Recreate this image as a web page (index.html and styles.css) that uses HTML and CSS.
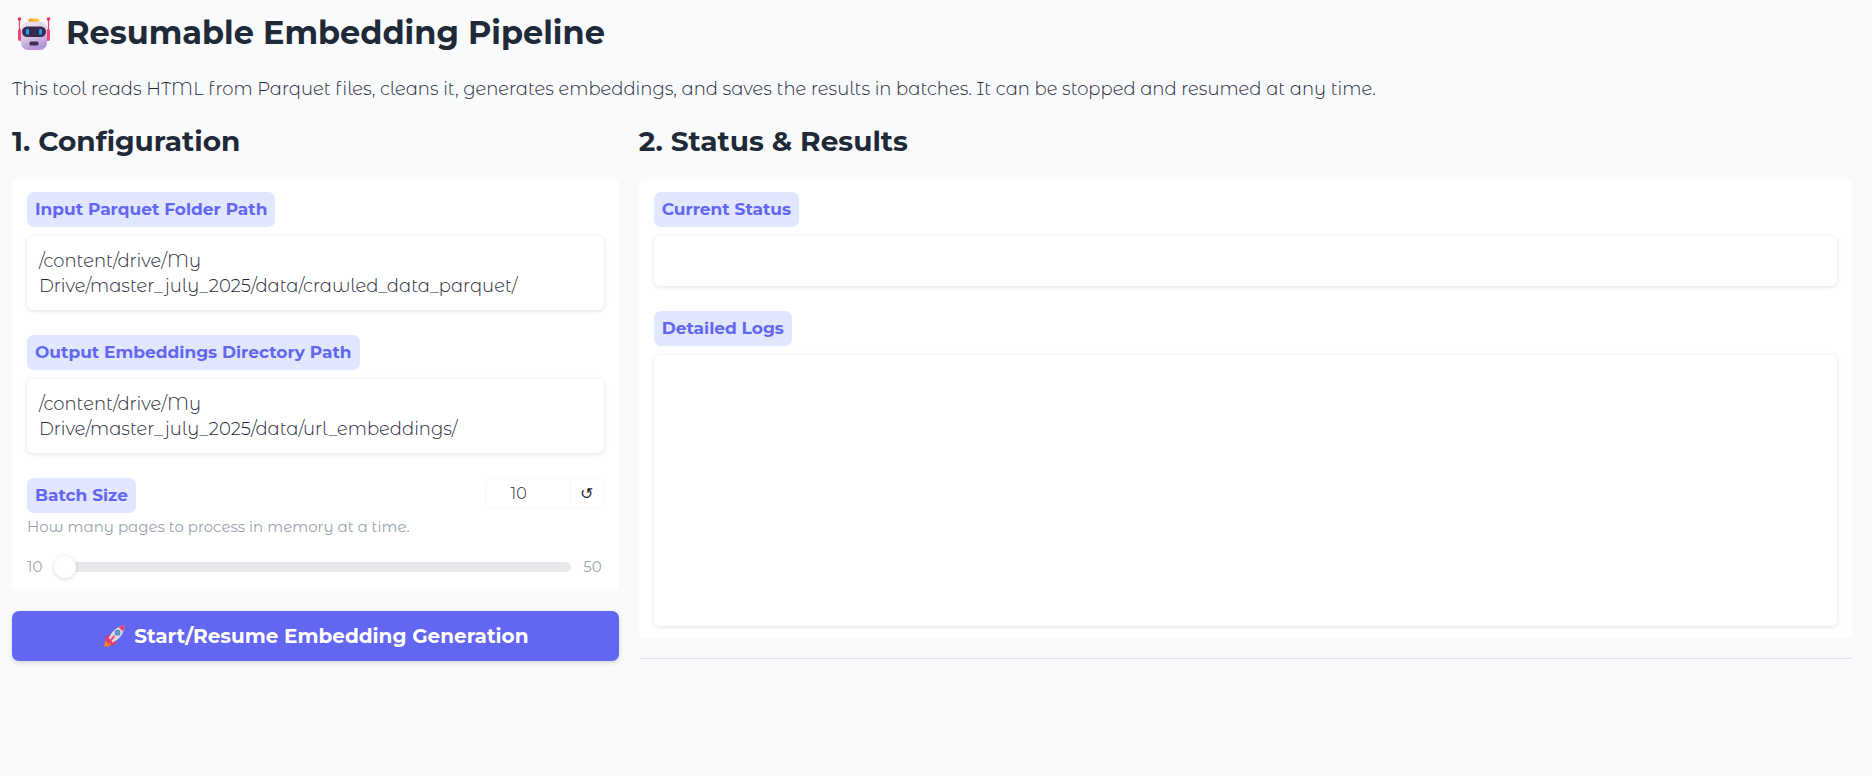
FILE: index.html
```html
<!DOCTYPE html>
<html lang="en">
<head>
<meta charset="utf-8">
<meta name="viewport" content="width=device-width, initial-scale=1">
<title>Resumable Embedding Pipeline</title>
<link rel="stylesheet" href="styles.css">
</head>
<body>
<main class="page">
  <header class="intro">
    <h1 class="title">
      <svg class="title-icon" viewBox="0 0 40 40" aria-hidden="true">
        <defs>
          <linearGradient id="head" x1="0" y1="0" x2="0.3" y2="1">
            <stop offset="0" stop-color="#efe6f2"/><stop offset="0.6" stop-color="#d6c5e2"/><stop offset="1" stop-color="#b695d6"/>
          </linearGradient>
          <linearGradient id="cap" x1="0" y1="0" x2="1" y2="0">
            <stop offset="0" stop-color="#f09a2c"/><stop offset="1" stop-color="#ffd23c"/>
          </linearGradient>
        </defs>
        <rect x="4" y="16" width="4" height="12" rx="2" fill="#e8457a"/>
        <rect x="32" y="16" width="4" height="12" rx="2" fill="#f8447c"/>
        <path d="M5.500 6v18M34.500 6v18" stroke="#ee4478" stroke-width="1.300"/>
        <circle cx="5.500" cy="6" r="1.800" fill="#e5335f"/>
        <circle cx="34.500" cy="6" r="1.800" fill="#e5335f"/>
        <rect x="14.500" y="5.500" width="11" height="4.500" rx="1.800" fill="url(#cap)"/>
        <rect x="7" y="8.800" width="26" height="28.200" rx="7" fill="url(#head)"/>
        <rect x="8" y="13.500" width="24" height="10.500" rx="5.200" fill="#392a50"/>
        <rect x="12" y="15.800" width="3" height="6" rx="1.500" fill="#1e9df0"/>
        <rect x="25" y="15.800" width="3" height="6" rx="1.500" fill="#1e9df0"/>
        <rect x="15.500" y="28.500" width="9" height="4" rx="1.600" fill="#402c55"/>
      </svg>
      <span>Resumable Embedding Pipeline</span>
    </h1>
    <p class="lead">This tool reads HTML from Parquet files, cleans it, generates embeddings, and saves the results in batches. It can be stopped and resumed at any time.</p>
  </header>

  <div class="columns">
    <section class="column">
      <h2 class="heading">1. Configuration</h2>
      <div class="card">
        <div class="field">
          <label class="tag" for="input-path">Input Parquet Folder Path</label>
          <textarea class="box" id="input-path" rows="2">/content/drive/My Drive/master_july_2025/data/crawled_data_parquet/</textarea>
        </div>
        <div class="field">
          <label class="tag" for="output-path">Output Embeddings Directory Path</label>
          <textarea class="box" id="output-path" rows="2">/content/drive/My Drive/master_july_2025/data/url_embeddings/</textarea>
        </div>
        <div class="batch">
          <div class="batch-head">
            <label class="tag" for="batch-size">Batch Size</label>
            <div class="batch-value">
              <input class="number" id="batch-number" type="number" min="10" max="50" value="10" aria-label="Batch size value">
              <button class="reset" type="button" aria-label="Reset to default value">↺</button>
            </div>
          </div>
          <p class="hint">How many pages to process in memory at a time.</p>
          <div class="slider">
            <span>10</span>
            <input class="range" id="batch-size" type="range" min="10" max="50" value="10">
            <span>50</span>
          </div>
        </div>
      </div>
      <button class="primary" type="button">
        <svg class="button-icon" viewBox="0 0 24 24" aria-hidden="true">
          <path d="M3 17.5 7 16l2.5 3.2-3 3.3H2.2z" fill="#f58a1e"/>
          <path d="M8.5 10.5C5 10.5 3 13 3.4 17.5L9 15zM14.5 15.5c0 3.500-2 6-6.500 6.500L10 16z" fill="#e83a68"/>
          <path d="M22.500 1.500C16 2 10 6.500 6.500 14.500l4 4C18 15 22 9.500 22.500 1.500z" fill="#ded8e6"/>
          <path d="M22.500 1.500c-2.400.2-4.200.8-5.800 1.700l4 4.300c1-1.800 1.600-3.700 1.800-6z" fill="#ef3d62"/>
          <path d="M6.500 14.500 4.800 19.400l5.700-.9z" fill="#c92c57"/>
          <path d="M12 12.500 6.500 19" stroke="#f04a78" stroke-width="2" stroke-linecap="round"/>
          <circle cx="15.500" cy="8.700" r="2.900" fill="#687890"/>
          <circle cx="15.500" cy="8.700" r="2.100" fill="#46a5ec"/>
        </svg>
        <span>Start/Resume Embedding Generation</span>
      </button>
    </section>

    <section class="column column-wide">
      <h2 class="heading">2. Status &amp; Results</h2>
      <div class="card">
        <div class="field">
          <label class="tag" for="status">Current Status</label>
          <textarea class="box box-status" id="status" rows="1" readonly></textarea>
        </div>
        <div class="field">
          <label class="tag" for="logs">Detailed Logs</label>
          <textarea class="box box-logs" id="logs" readonly></textarea>
        </div>
      </div>
      <hr class="rule">
    </section>
  </div>
</main>
</body>
</html>
```
FILE: styles.css
```css
* { box-sizing: border-box; }

body {
  margin: 0;
  background: #f9fafc;
  color: #1f2937;
  font-family: "Montserrat Alternates", Montserrat, Inter, sans-serif;
  font-size: 18px;
  font-weight: 300;
  line-height: 25px;
}

button, input, textarea { font: inherit; color: inherit; }
h1, h2, p { margin: 0; }

.title, .heading, .tag, .primary { font-family: Montserrat, Inter, sans-serif; }

.page { padding: 13px 20px 12px 12px; }

.intro {
  display: flex;
  flex-direction: column;
  gap: 24px;
}

.title {
  display: flex;
  align-items: center;
  gap: 12px;
  padding-left: 2px;
  font-size: 32px;
  font-weight: 700;
  line-height: 40px;
}
.title-icon { width: 40px; height: 40px; flex: none; }

.columns {
  display: flex;
  gap: 20px;
  margin-top: 22px;
}
.column { flex: 1 1 0; min-width: 0; }
.column-wide { flex-grow: 2; }

.heading {
  font-size: 28px;
  font-weight: 700;
  line-height: 34px;
  margin-bottom: 21px;
}

.card {
  display: flex;
  flex-direction: column;
  gap: 25px;
  padding: 13px 15px 12px;
  background: #fff;
  border-radius: 6px;
}

.field {
  display: flex;
  flex-direction: column;
  align-items: flex-start;
  gap: 9px;
}

.tag {
  padding: 5px 8px;
  border-radius: 7px;
  background: #e0e7ff;
  color: #6366f1;
  font-size: 17px;
  font-weight: 700;
}

.box {
  display: block;
  width: 100%;
  padding: 13px 12px 11px;
  border: 0;
  border-radius: 6px;
  background: #fff;
  box-shadow: 0 1px 5px rgba(0, 0, 0, 0.12);
  resize: none;
  overflow: hidden;
}
.box-status { min-height: 50px; }
.box-logs { height: 271px; }

.batch-head {
  display: flex;
  justify-content: space-between;
  align-items: flex-start;
}
.batch-value {
  display: flex;
  border: 1px solid #f7f8fa;
  border-radius: 6px;
  overflow: hidden;
  font-size: 16px;
}
.number {
  width: 84px;
  height: 28px;
  padding: 0 18px 0 0;
  border: 0;
  background: none;
  text-align: center;
  appearance: textfield;
}
.number::-webkit-inner-spin-button { display: none; }
.reset {
  width: 33px;
  padding: 0;
  border: 0;
  border-left: 1px solid #f7f8fa;
  background: none;
  font-family: "DejaVu Sans", sans-serif;
}

.hint {
  margin-top: 1px;
  color: #9ca3af;
  font-size: 15px;
  font-weight: 400;
}

.slider {
  display: flex;
  align-items: center;
  gap: 12px;
  margin-top: 15px;
  padding-right: 2px;
  color: #9ca3af;
  font-size: 15px;
  font-weight: 400;
}
.range {
  flex: 1;
  min-width: 0;
  height: 22px;
  margin: 0;
  background: none;
  appearance: none;
}
.range::-webkit-slider-runnable-track {
  height: 10px;
  border-radius: 5px;
  background: #e5e7eb;
}
.range::-webkit-slider-thumb {
  width: 22px;
  height: 22px;
  margin-top: -6px;
  border-radius: 50%;
  background: #fff;
  box-shadow: 0 1px 4px rgba(0, 0, 0, 0.16);
  appearance: none;
}

.primary {
  display: flex;
  justify-content: center;
  align-items: center;
  gap: 8px;
  width: 100%;
  margin-top: 20px;
  padding: 12px;
  border: 0;
  border-radius: 7px;
  background: #6366f1;
  box-shadow: 0 2px 5px rgba(0, 0, 0, 0.14);
  color: #fff;
  font-size: 20px;
  font-weight: 700;
  line-height: 26px;
}
.button-icon { width: 24px; height: 24px; flex: none; }

.rule {
  margin: 20px 0 0;
  border: 0;
  border-top: 1px solid #dfe1e5;
}
```
